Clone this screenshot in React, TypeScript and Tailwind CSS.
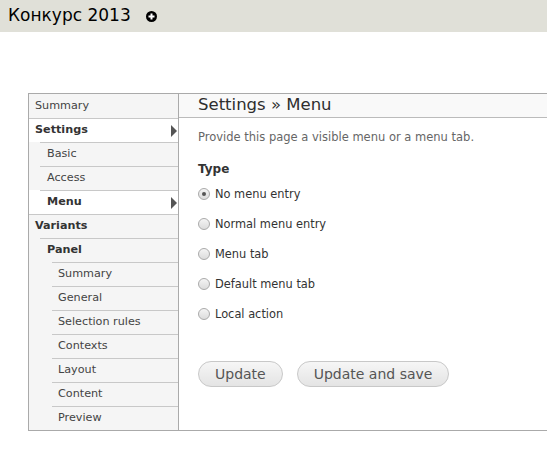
import { ReactNode } from "react";

const font = { fontFamily: '"DejaVu Sans", Verdana, sans-serif' };

type NavItem = {
  label: string;
  level: 0 | 1 | 2;
  active?: boolean;
  arrow?: boolean;
  bold?: boolean;
};

const navItems: NavItem[] = [
  { label: "Summary", level: 0 },
  { label: "Settings", level: 0, active: true, arrow: true, bold: true },
  { label: "Basic", level: 1 },
  { label: "Access", level: 1 },
  { label: "Menu", level: 1, active: true, arrow: true, bold: true },
  { label: "Variants", level: 0, bold: true },
  { label: "Panel", level: 1, bold: true },
  { label: "Summary", level: 2 },
  { label: "General", level: 2 },
  { label: "Selection rules", level: 2 },
  { label: "Contexts", level: 2 },
  { label: "Layout", level: 2 },
  { label: "Content", level: 2 },
  { label: "Preview", level: 2 },
];

const indent = ["pl-0", "pl-[11px]", "pl-[23px]"];
const textIndent = ["pl-[6px]", "pl-[7px]", "pl-[6px]"];

function Arrow() {
  return (
    <svg width="6" height="12" viewBox="0 0 6 12" className="mr-[1px]">
      <path d="M0 0 L6 6 L0 12 Z" fill="#555" />
    </svg>
  );
}

function NavRow({ item, first }: { item: NavItem; first: boolean }) {
  return (
    <div className={`${indent[item.level]} ${item.active ? "bg-white" : ""}`}>
      <div
        className={`flex h-6 items-center justify-between ${textIndent[item.level]} ${
          first ? "" : "border-t border-[#c8c8c8]"
        } ${item.active ? "bg-white" : ""}`}
      >
        <span
          className={`text-[11.2px] ${item.bold ? "font-bold text-[#333]" : "text-[#444]"}`}
        >
          {item.label}
        </span>
        {item.arrow && <Arrow />}
      </div>
    </div>
  );
}

function Radio({ checked, children }: { checked?: boolean; children: ReactNode }) {
  return (
    <label className="flex h-[30px] items-center gap-[5px]">
      <span className="flex h-[12px] w-[12px] items-center justify-center rounded-full border border-[#aaa] bg-gradient-to-b from-[#f4f4f4] to-[#dcdcdc]">
        {checked && <span className="h-[4px] w-[4px] rounded-full bg-[#555]" />}
      </span>
      <span className="text-[11.4px] text-[#333]">{children}</span>
    </label>
  );
}

function Button({ children }: { children: ReactNode }) {
  return (
    <button
      type="button"
      className="h-[26px] rounded-full border border-[#c8c8c8] bg-gradient-to-b from-[#f6f6f6] to-[#e4e4e4] px-[16px] text-[14px] text-[#555]"
    >
      {children}
    </button>
  );
}

export default function App() {
  return (
    <div className="h-[453px] w-[547px] overflow-hidden bg-white" style={font}>
      <div className="flex h-8 items-center gap-[15px] bg-[#e0e0d8] pl-2">
        <h1 className="text-[17px] text-black">Конкурс 2013</h1>
        <span className="flex h-[11px] w-[11px] items-center justify-center rounded-full bg-black">
          <svg width="7" height="7" viewBox="0 0 7 7">
            <path d="M2.5 0.5h2v2h2v2h-2v2h-2v-2h-2v-2h2z" fill="#fff" />
          </svg>
        </span>
      </div>

      <div className="ml-7 mt-[61px] flex">
        <nav className="w-[150px] border border-r-0 border-[#aaa] bg-[#f5f5f5]">
          {navItems.map((item, i) => (
            <NavRow key={i} item={item} first={i === 0} />
          ))}
        </nav>

        <section className="flex-1 border-b border-l border-t border-[#aaa]">
          <div className="flex h-6 items-center border-b border-[#bbb] bg-[#f9f9f9] pl-[19px]">
            <h2 className="text-[16.5px] text-[#2e2e2e]">Settings » Menu</h2>
          </div>
          <div className="pl-[19px] pt-[11px]">
            <p className="text-[11.5px] text-[#666]">
              Provide this page a visible menu or a menu tab.
            </p>
            <h3 className="mt-[14px] text-[12px] font-bold text-[#333]">Type</h3>
            <div className="mt-[1px]">
              <Radio checked>No menu entry</Radio>
              <Radio>Normal menu entry</Radio>
              <Radio>Menu tab</Radio>
              <Radio>Default menu tab</Radio>
              <Radio>Local action</Radio>
            </div>
            <div className="mt-[32px] flex gap-[14px]">
              <Button>Update</Button>
              <Button>Update and save</Button>
            </div>
          </div>
        </section>
      </div>
    </div>
  );
}
